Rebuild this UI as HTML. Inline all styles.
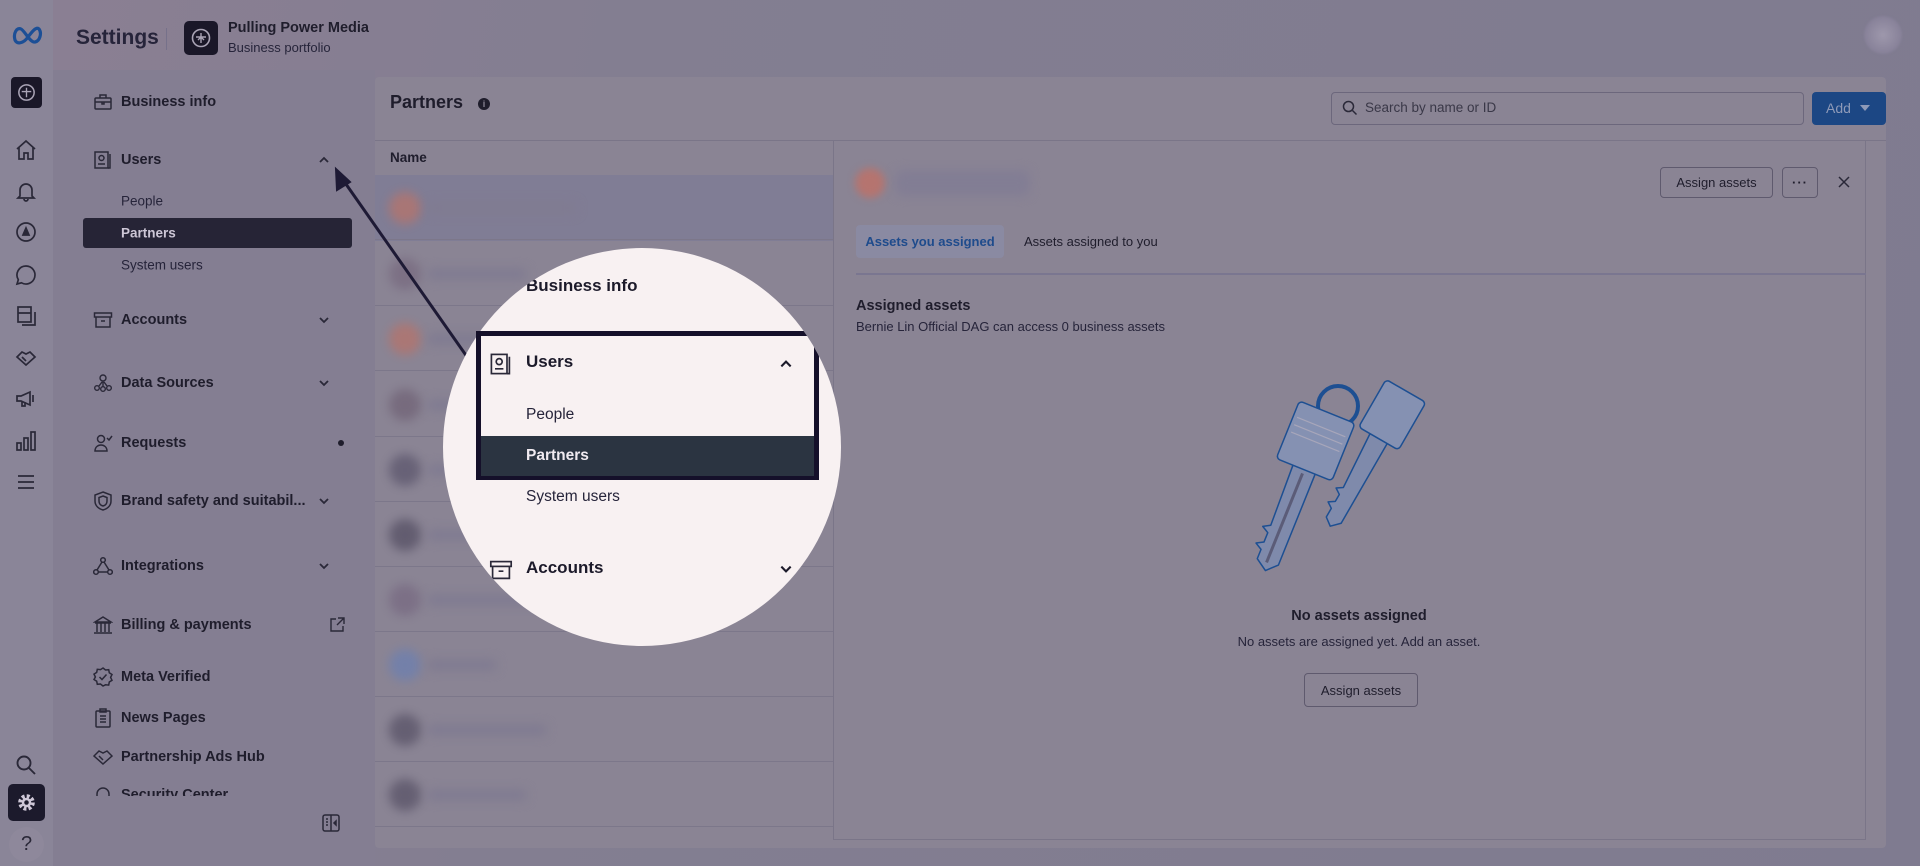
<!DOCTYPE html>
<html><head><meta charset="utf-8"><style>
*{margin:0;padding:0;box-sizing:border-box}
body{width:1920px;height:866px;overflow:hidden;background:#837e91;font-family:"Liberation Sans",sans-serif;color:#1f1d2c;position:relative}
.a{position:absolute}
.bg{left:0;top:0;width:1920px;height:866px;background:linear-gradient(100deg,#8b7f93 0%,#837e91 30%,#7f7b90 100%)}
.rail{left:0;top:0;width:53px;height:866px;background:#8a8598}
.side{left:53px;top:70px;width:322px;height:796px;background:#847e92}
.it{position:absolute;left:121px;font-size:14.5px;font-weight:bold;color:#1f1d2c;transform:translateY(-50%);white-space:nowrap}
.sub{position:absolute;left:121px;font-size:13.5px;color:#26243a;transform:translateY(-50%)}
.ic{position:absolute;left:93px;transform:translateY(-50%)}
.chev{position:absolute;left:318px;transform:translateY(-50%)}
.ri{position:absolute;left:14px;transform:translateY(-50%)}
svg{display:block}
.panel{left:375px;top:77px;width:1511px;height:771px;background:#8a8494;border-radius:4px}
.row{position:absolute;left:375px;width:458px;height:65px;border-bottom:1px solid #7c778a}
.blob{position:absolute;left:14px;top:17px;width:32px;height:32px;border-radius:50%;filter:blur(5px);opacity:.85}
.bar{position:absolute;left:52px;top:27px;height:12px;border-radius:6px;background:#807b91;filter:blur(5px)}
.btn{position:absolute;border:1px solid #5f5a6e;border-radius:4px;font-size:13px;color:#1f1d2c;display:flex;align-items:center;justify-content:center}
</style></head><body>
<div class="a bg"></div>
<div class="a rail"></div>
<div class="a side"></div>

<svg class="a" style="left:12px;top:25px" width="32" height="20" viewBox="0 0 32 20"><path d="M3 15 C1 8 5 2 9 4 C13 6 18 18 23 17 C28 16 30 8 27 4 C24 1 19 8 16 12 C12 18 5 20 3 15Z" fill="none" stroke="#1c4f96" stroke-width="3.2"/></svg>
<div class="a" style="left:76px;top:26px;font-size:21px;font-weight:bold;color:#26243a">Settings</div>
<div class="a" style="left:166px;top:28px;width:1px;height:22px;background:#76718a"></div>
<div class="a" style="left:184px;top:21px;width:34px;height:34px;background:#1a1728;border-radius:5px"></div>
<svg class="a" style="left:190px;top:27px" width="22" height="22" viewBox="0 0 22 22"><circle cx="11" cy="11" r="8.5" fill="none" stroke="#a9a3b5" stroke-width="1.6"/><path d="M6 10h10M11 6v10M8 13l3-3 3 3" stroke="#a9a3b5" stroke-width="1.4" fill="none"/></svg>
<div class="a" style="left:228px;top:20px;font-size:14.5px;font-weight:bold;color:#1f1d2c">Pulling Power Media</div>
<div class="a" style="left:228px;top:40px;font-size:13px;color:#26243a">Business portfolio</div>
<div class="a" style="left:1864px;top:16px;width:38px;height:38px;border-radius:50%;background:radial-gradient(#9e98ac,#7d7790);filter:blur(1px)"></div>

<div class="a" style="left:11px;top:77px;width:31px;height:31px;background:#1a1728;border-radius:4px"></div>
<svg class="a" style="left:16px;top:82px" width="21" height="21" viewBox="0 0 22 22"><circle cx="11" cy="11" r="8" fill="none" stroke="#a9a3b5" stroke-width="1.6"/><path d="M6 10h10M11 6v10" stroke="#a9a3b5" stroke-width="1.4"/></svg>
<svg class="ri" style="top:150px" width="24" height="24" viewBox="0 0 24 24" fill="none" stroke="#2a2838" stroke-width="1.7"><path d="M3 11 12 3l9 8M5 9v12h5v-6h4v6h5V9"/></svg>
<svg class="ri" style="top:191px" width="24" height="24" viewBox="0 0 24 24" fill="none" stroke="#2a2838" stroke-width="1.7"><path d="M6 17V11a6 6 0 0 1 12 0v6l2 2H4zM10 20a2 2 0 0 0 4 0"/></svg>
<svg class="ri" style="top:232px" width="24" height="24" viewBox="0 0 24 24" fill="none" stroke="#2a2838" stroke-width="1.7"><circle cx="12" cy="12" r="9"/><path d="M9 15l3-7 3 7z" fill="#2a2838"/></svg>
<svg class="ri" style="top:275px" width="24" height="24" viewBox="0 0 24 24" fill="none" stroke="#2a2838" stroke-width="1.7"><path d="M12 3a9 9 0 1 1-4.5 16.8L3 21l1.3-4.3A9 9 0 0 1 12 3z"/></svg>
<svg class="ri" style="top:316px" width="24" height="24" viewBox="0 0 24 24" fill="none" stroke="#2a2838" stroke-width="1.7"><rect x="4" y="3" width="13" height="15"/><path d="M4 9h13M8 21h13V8"/></svg>
<svg class="ri" style="top:357px" width="24" height="24" viewBox="0 0 24 24" fill="none" stroke="#2a2838" stroke-width="1.7"><path d="M3 12l5-5 4 2 4-2 5 5-9 8z M8 12l4 4"/></svg>
<svg class="ri" style="top:398px" width="24" height="24" viewBox="0 0 24 24" fill="none" stroke="#2a2838" stroke-width="1.7"><path d="M3 10v5h4l9 4V6L7 10zM8 15v5h3v-4M19 9v7"/></svg>
<svg class="ri" style="top:441px" width="24" height="24" viewBox="0 0 24 24" fill="none" stroke="#2a2838" stroke-width="1.7"><rect x="3" y="14" width="4" height="7"/><rect x="10" y="9" width="4" height="12"/><rect x="17" y="3" width="4" height="18"/></svg>
<svg class="ri" style="top:482px" width="24" height="24" viewBox="0 0 24 24" fill="none" stroke="#2a2838" stroke-width="1.7"><path d="M4 6h16M4 12h16M4 18h16"/></svg>
<svg class="ri" style="top:765px" width="24" height="24" viewBox="0 0 24 24" fill="none" stroke="#2a2838" stroke-width="1.9"><circle cx="10" cy="10" r="6.5"/><path d="M15 15l6 6"/></svg>
<div class="a" style="left:8px;top:784px;width:37px;height:37px;background:#1c1a2c;border-radius:5px"></div>
<svg class="a" style="left:16px;top:792px" width="21" height="21" viewBox="0 0 24 24"><circle cx="12" cy="12" r="7" fill="none" stroke="#cfc8d8" stroke-width="5" stroke-dasharray="3.2 2.3"/><circle cx="12" cy="12" r="5.5" fill="#cfc8d8"/><circle cx="12" cy="12" r="2.6" fill="#1c1a2c"/></svg>
<div class="a" style="left:9px;top:827px;width:35px;height:35px;border-radius:50%;background:#8e889b;font-size:20px;text-align:center;line-height:35px;color:#2a2838">?</div>

<svg class="ic" style="top:102px" width="20" height="20" viewBox="0 0 20 20" fill="none" stroke="#2a2838" stroke-width="1.5"><rect x="2" y="6" width="16" height="11" rx="1"/><path d="M7 6V3h6v3M2 10h16M9 10v2h2v-2"/></svg>
<div class="it" style="top:102px">Business info</div>
<svg class="ic" style="top:160px" width="20" height="20" viewBox="0 0 20 20" fill="none" stroke="#2a2838" stroke-width="1.5"><rect x="2" y="2" width="13" height="16"/><circle cx="8.5" cy="8" r="2.5"/><path d="M5 14h7M17 4v14h-2"/></svg>
<div class="it" style="top:160px">Users</div>
<svg class="chev" style="top:160px" width="12" height="12" viewBox="0 0 12 12"><path d="M2 8l4-4 4 4" fill="none" stroke="#2a2838" stroke-width="1.8"/></svg>
<div class="sub" style="top:201px">People</div>
<div class="a" style="left:83px;top:218px;width:269px;height:30px;background:#262436;border-radius:3px"></div>
<div class="sub" style="top:233px;color:#cdc7d6;font-weight:bold">Partners</div>
<div class="sub" style="top:265px">System users</div>
<svg class="ic" style="top:320px" width="20" height="20" viewBox="0 0 20 20" fill="none" stroke="#2a2838" stroke-width="1.5"><rect x="1.5" y="3" width="17" height="4"/><path d="M3 7v10h14V7M8 11h4"/></svg>
<div class="it" style="top:320px">Accounts</div>
<svg class="chev" style="top:320px" width="12" height="12" viewBox="0 0 12 12"><path d="M2 4l4 4 4-4" fill="none" stroke="#2a2838" stroke-width="1.8"/></svg>
<svg class="ic" style="top:383px" width="20" height="20" viewBox="0 0 20 20" fill="none" stroke="#2a2838" stroke-width="1.4"><circle cx="10" cy="5" r="3"/><circle cx="4" cy="15" r="2.3"/><circle cx="10" cy="16" r="2.3"/><circle cx="16" cy="15" r="2.3"/><path d="M10 8v6M6 13l3-4M14 13l-3-4"/></svg>
<div class="it" style="top:383px">Data Sources</div>
<svg class="chev" style="top:383px" width="12" height="12" viewBox="0 0 12 12"><path d="M2 4l4 4 4-4" fill="none" stroke="#2a2838" stroke-width="1.8"/></svg>
<svg class="ic" style="top:443px" width="20" height="20" viewBox="0 0 20 20" fill="none" stroke="#2a2838" stroke-width="1.5"><circle cx="8" cy="6" r="3.5"/><path d="M2 18c0-4 3-6 6-6s6 2 6 6zM14 5l2 2 3-4"/></svg>
<div class="it" style="top:443px">Requests</div>
<div class="a" style="left:338px;top:440px;width:6px;height:6px;border-radius:50%;background:#1f1d2c"></div>
<svg class="ic" style="top:501px" width="20" height="20" viewBox="0 0 20 20" fill="none" stroke="#2a2838" stroke-width="1.5"><path d="M10 1l8 3v6c0 5-4 8-8 9-4-1-8-4-8-9V4z"/><path d="M10 5l4 1.5v3.5c0 3-2 4.5-4 5-2-.5-4-2-4-5V6.5z"/></svg>
<div class="it" style="top:501px">Brand safety and suitabil...</div>
<svg class="chev" style="top:501px" width="12" height="12" viewBox="0 0 12 12"><path d="M2 4l4 4 4-4" fill="none" stroke="#2a2838" stroke-width="1.8"/></svg>
<svg class="ic" style="top:566px" width="20" height="20" viewBox="0 0 20 20" fill="none" stroke="#2a2838" stroke-width="1.5"><circle cx="10" cy="4" r="2.3"/><circle cx="3" cy="16" r="2.3"/><circle cx="17" cy="16" r="2.3"/><path d="M9 6l-5 8M11 6l5 8M5 16h10"/></svg>
<div class="it" style="top:566px">Integrations</div>
<svg class="chev" style="top:566px" width="12" height="12" viewBox="0 0 12 12"><path d="M2 4l4 4 4-4" fill="none" stroke="#2a2838" stroke-width="1.8"/></svg>
<svg class="ic" style="top:625px" width="20" height="20" viewBox="0 0 20 20" fill="none" stroke="#2a2838" stroke-width="1.5"><path d="M2 7l8-5 8 5zM2 8h16M4 8v9M8 8v9M12 8v9M16 8v9M1 18h18"/></svg>
<div class="it" style="top:625px">Billing &amp; payments</div>
<svg class="a" style="left:329px;top:617px" width="16" height="16" viewBox="0 0 16 16" fill="none" stroke="#2a2838" stroke-width="1.4"><path d="M7 2H2v12h12V9M9 1h6v6M15 1l-7 7"/></svg>
<svg class="ic" style="top:677px" width="20" height="20" viewBox="0 0 20 20" fill="none" stroke="#2a2838" stroke-width="1.5"><path d="M10 1l2.5 2 3.2-.3.6 3.1 2.7 1.7-1.4 2.9 1.4 2.9-2.7 1.7-.6 3.1-3.2-.3L10 19l-2.5-2-3.2.3-.6-3.1-2.7-1.7L2.4 10 1 7.1l2.7-1.7.6-3.1 3.2.3z"/><path d="M6.5 10l2.5 2.5 4.5-5"/></svg>
<div class="it" style="top:677px">Meta Verified</div>
<svg class="ic" style="top:718px" width="20" height="20" viewBox="0 0 20 20" fill="none" stroke="#2a2838" stroke-width="1.5"><rect x="3" y="3" width="14" height="16" rx="1"/><rect x="7" y="1" width="6" height="3"/><path d="M7 8h6M7 11h6M7 14h6"/></svg>
<div class="it" style="top:718px">News Pages</div>
<svg class="ic" style="top:757px" width="20" height="20" viewBox="0 0 20 20" fill="none" stroke="#2a2838" stroke-width="1.5"><path d="M1 9l5-5 4 2 4-2 5 5-9 8z M6 9l4 4"/></svg>
<div class="it" style="top:757px">Partnership Ads Hub</div>
<div class="a" style="left:53px;top:786px;width:322px;height:80px;overflow:hidden">
<svg class="a" style="left:40px;top:0px" width="20" height="20" viewBox="0 0 20 20" fill="none" stroke="#2a2838" stroke-width="1.5"><path d="M4 14V8a6 6 0 0 1 12 0v6M2 14h16"/></svg>
<div class="a" style="left:68px;top:1px;font-size:14.5px;font-weight:bold">Security Center</div>
</div>
<div class="a" style="left:53px;top:796px;width:322px;height:70px;background:#847e92"></div>
<svg class="a" style="left:321px;top:813px" width="20" height="20" viewBox="0 0 20 20" fill="none" stroke="#2a2838" stroke-width="1.5"><rect x="2" y="2" width="16" height="16" rx="2"/><path d="M10 2v16M5 6h2M5 9h2M5 12h2"/><path d="M15 8l-2 2 2 2z" fill="#2a2838"/></svg>

<div class="a panel"></div>
<div class="a" style="left:390px;top:92px;font-size:18px;font-weight:bold;color:#1f1d2c">Partners</div>
<div class="a" style="left:478px;top:98px;width:12px;height:12px;border-radius:50%;background:#1f1d2c;color:#8a8494;font-size:9px;font-weight:bold;text-align:center;line-height:12px">i</div>
<div class="a" style="left:1331px;top:92px;width:473px;height:33px;border:1px solid #6c677c;border-radius:4px"></div>
<svg class="a" style="left:1342px;top:100px" width="16" height="16" viewBox="0 0 16 16" fill="none" stroke="#2a2838" stroke-width="1.5"><circle cx="6.5" cy="6.5" r="5"/><path d="M10.5 10.5l4 4"/></svg>
<div class="a" style="left:1365px;top:100px;font-size:13.5px;color:#3a3848">Search by name or ID</div>
<div class="a" style="left:1812px;top:92px;width:74px;height:33px;background:#1c4784;border-radius:4px;color:#8e9ab8;font-size:14px;line-height:33px;padding-left:14px">Add</div>
<svg class="a" style="left:1860px;top:105px" width="10" height="7" viewBox="0 0 10 7"><path d="M0 0h10L5 6z" fill="#8e9ab8"/></svg>
<div class="a" style="left:375px;top:140px;width:1511px;height:1px;background:#7a7588"></div>
<div class="a" style="left:390px;top:150px;font-size:13.5px;font-weight:bold;color:#1f1d2c">Name</div>
<div class="a" style="left:375px;top:175px;width:458px;height:66px;background:#807d95"></div>

<div class="row" style="top:175px"><div class="blob" style="background:#b07570"></div><div class="bar" style="width:150px"></div></div>
<div class="row" style="top:241px"><div class="blob" style="background:#7a6d82"></div><div class="bar" style="width:100px"></div></div>
<div class="row" style="top:306px"><div class="blob" style="background:#b07570"></div><div class="bar" style="width:80px"></div></div>
<div class="row" style="top:372px"><div class="blob" style="background:#74677a"></div><div class="bar" style="width:90px"></div></div>
<div class="row" style="top:437px"><div class="blob" style="background:#625c72"></div><div class="bar" style="width:110px"></div></div>
<div class="row" style="top:502px"><div class="blob" style="background:#5c566a"></div><div class="bar" style="width:80px"></div></div>
<div class="row" style="top:567px"><div class="blob" style="background:#7a6d84"></div><div class="bar" style="width:120px"></div></div>
<div class="row" style="top:632px"><div class="blob" style="background:#7080ad"></div><div class="bar" style="width:70px"></div></div>
<div class="row" style="top:697px"><div class="blob" style="background:#5f596d"></div><div class="bar" style="width:120px"></div></div>
<div class="row" style="top:762px"><div class="blob" style="background:#5f596d"></div><div class="bar" style="width:100px"></div></div>

<div class="a" style="left:833px;top:141px;width:1033px;height:699px;border-left:1px solid #7a7588;border-right:1px solid #7a7588;border-bottom:1px solid #7a7588"></div>
<div class="a" style="left:855px;top:168px;width:30px;height:30px;border-radius:50%;background:#b5746f;filter:blur(4px)"></div>
<div class="a" style="left:895px;top:170px;width:135px;height:26px;border-radius:8px;background:#827d94;filter:blur(5px)"></div>
<div class="btn" style="left:1660px;top:167px;width:113px;height:31px">Assign assets</div>
<div class="btn" style="left:1782px;top:167px;width:36px;height:31px;font-weight:bold;letter-spacing:1px">···</div>
<svg class="a" style="left:1837px;top:175px" width="14" height="14" viewBox="0 0 14 14"><path d="M2 2l10 10M12 2L2 12" stroke="#2a2838" stroke-width="1.5"/></svg>
<div class="a" style="left:856px;top:225px;width:148px;height:33px;background:#8a8aa2;border-radius:4px;color:#1e4b8c;font-size:13px;font-weight:bold;line-height:33px;text-align:center">Assets you assigned</div>
<div class="a" style="left:1024px;top:234px;font-size:13px;color:#1f1d2c">Assets assigned to you</div>
<div class="a" style="left:856px;top:273px;width:1010px;height:2px;background:#7a7690"></div>
<div class="a" style="left:856px;top:298px;font-size:14.5px;font-weight:bold">Assigned assets</div>
<div class="a" style="left:856px;top:319px;font-size:13px;color:#26243a">Bernie Lin Official DAG can access 0 business assets</div>

<!-- keys (page coords) -->
<svg class="a" style="left:0;top:0" width="1920" height="866">
<g stroke-linejoin="round">
<!-- right key -->
<g transform="rotate(30 1395 410)">
 <path d="M1385 440h20v95l-8 8-8-6v-10l-6-4 6-4v-8l-6-4 6-4z" fill="#7f8aab" stroke="#1d4f92" stroke-width="1.5"/>
 <rect x="1372" y="388" width="46" height="55" rx="4" fill="#8591b2" stroke="#1d4f92" stroke-width="1.5"/>
</g>
<!-- ring -->
<circle cx="1338" cy="406" r="20" fill="none" stroke="#1d4f92" stroke-width="4"/>
<!-- left key -->
<g transform="rotate(22 1316 440)">
 <path d="M1304 470h24v100l-10 10-12-8v-10l-7-4 7-4v-10l-7-4 7-4z" fill="#7f8aab" stroke="#1d4f92" stroke-width="1.5"/>
 <path d="M1316 476v96" stroke="#5b5c78" stroke-width="3"/>
 <rect x="1286" y="410" width="60" height="62" rx="4" fill="#8591b2" stroke="#1d4f92" stroke-width="1.5"/>
 <path d="M1290 426h52M1290 434h52M1290 442h52" stroke="#a7a6ba" stroke-width="1.2"/>
</g>
</g>
</svg>
<div class="a" style="left:1159px;top:608px;width:400px;text-align:center;font-size:14.5px;font-weight:bold">No assets assigned</div>
<div class="a" style="left:1159px;top:634px;width:400px;text-align:center;font-size:13px;color:#26243a">No assets are assigned yet. Add an asset.</div>
<div class="btn" style="left:1304px;top:673px;width:114px;height:34px">Assign assets</div>

<svg class="a" style="left:0;top:0" width="1920" height="866"><path d="M477 371 L341 177" stroke="#1e1a35" stroke-width="3" fill="none"/><path d="M336 169 L337 190 L350 182 Z" fill="#1e1a35" stroke="#1e1a35" stroke-width="2"/></svg>

<div class="a" style="left:443px;top:248px;width:398px;height:398px;border-radius:50%;background:#f8f1f2;overflow:hidden">
 <div class="a" style="left:83px;top:28px;font-size:17px;font-weight:bold;color:#1c1a2a">Business info</div>
 <div class="a" style="left:33px;top:83px;width:343px;height:149px;border:5px solid #15102a"></div>
 <div class="a" style="left:38px;top:188px;width:333px;height:40px;background:#2b3441"></div>
 <svg class="a" style="left:46px;top:104px" width="24" height="24" viewBox="0 0 20 20" fill="none" stroke="#2a2838" stroke-width="1.4"><rect x="2" y="2" width="13" height="16"/><circle cx="8.5" cy="8" r="2.5"/><path d="M5 14h7M17 4v14h-2"/></svg>
 <div class="a" style="left:83px;top:104px;font-size:17px;font-weight:bold;color:#1c1a2a">Users</div>
 <svg class="a" style="left:336px;top:109px" width="14" height="14" viewBox="0 0 12 12"><path d="M2 8l4-4 4 4" fill="none" stroke="#1c1a2a" stroke-width="1.8"/></svg>
 <div class="a" style="left:83px;top:158px;font-size:15.5px;color:#26243a">People</div>
 <div class="a" style="left:83px;top:199px;font-size:15.5px;font-weight:bold;color:#f0eaf0">Partners</div>
 <div class="a" style="left:83px;top:240px;font-size:15.5px;color:#26243a">System users</div>
 <svg class="a" style="left:46px;top:310px" width="24" height="24" viewBox="0 0 20 20" fill="none" stroke="#2a2838" stroke-width="1.4"><rect x="1.5" y="3" width="17" height="4"/><path d="M3 7v10h14V7M8 11h4"/></svg>
 <div class="a" style="left:83px;top:310px;font-size:17px;font-weight:bold;color:#1c1a2a">Accounts</div>
 <svg class="a" style="left:336px;top:314px" width="14" height="14" viewBox="0 0 12 12"><path d="M2 4l4 4 4-4" fill="none" stroke="#1c1a2a" stroke-width="1.8"/></svg>
</div>
<div class="a" style="left:476px;top:331px;width:5px;height:149px;background:#15102a"></div>
</body></html>
